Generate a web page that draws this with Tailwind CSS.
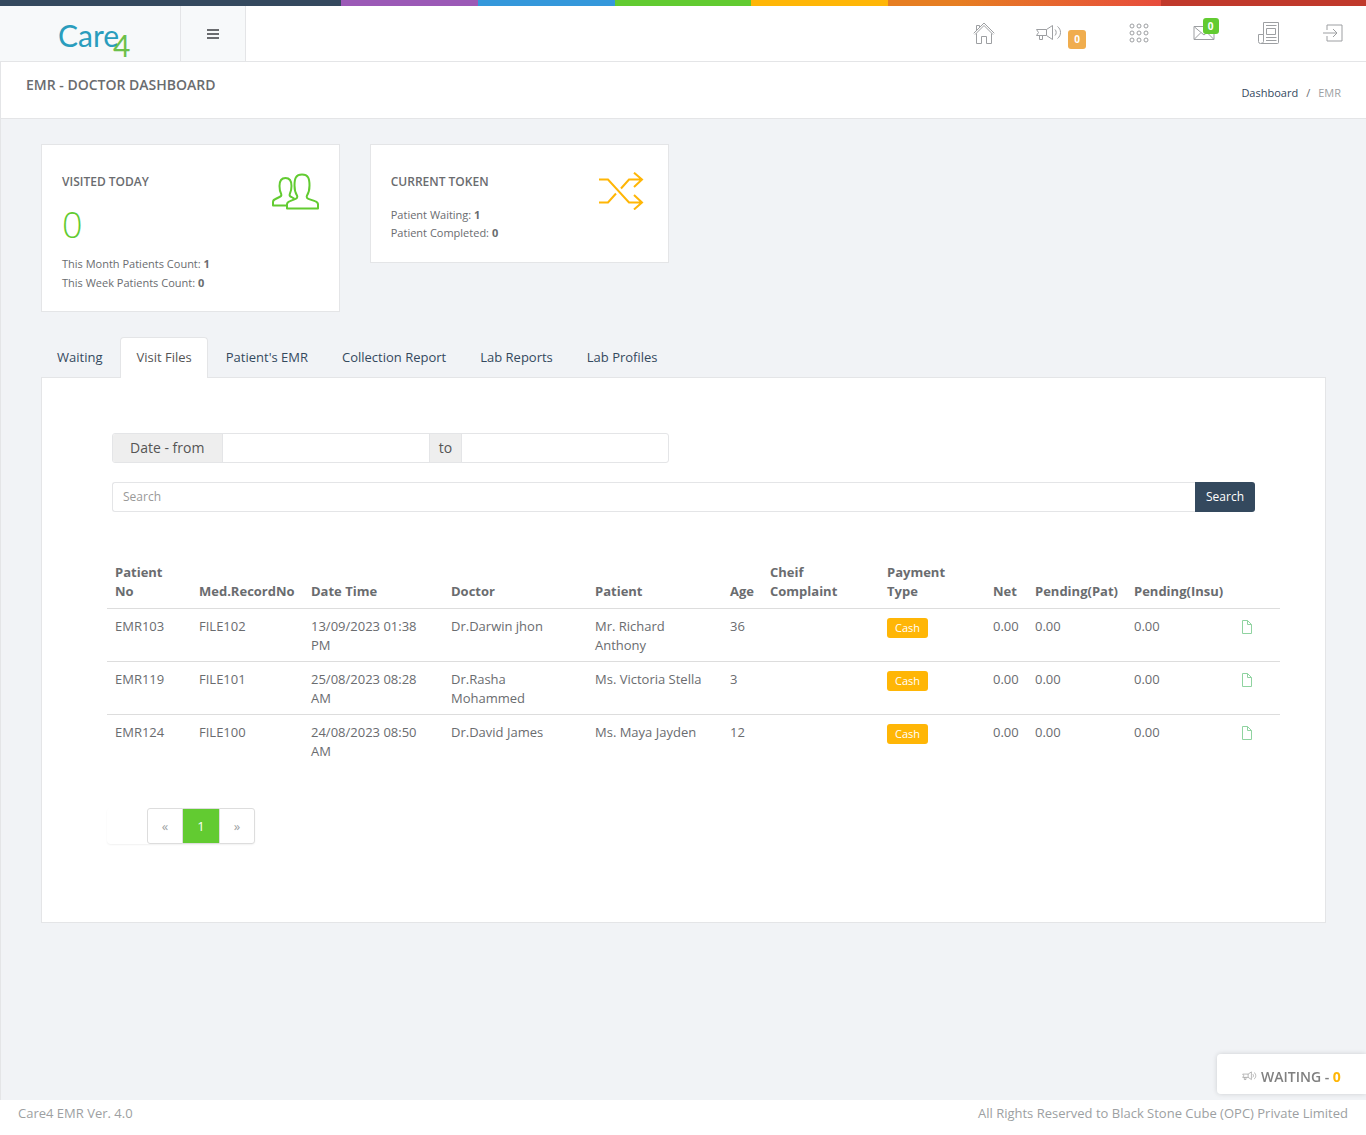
<!DOCTYPE html>
<html lang="en">
<head>
    <meta charset="utf-8">
    <meta name="viewport" content="width=device-width, initial-scale=1">
    <title>Care4 | EMR</title>
    <script src="https://cdn.jsdelivr.net/npm/@tailwindcss/browser@4"></script>
</head>
<body class="min-h-screen flex flex-col bg-[#f1f3f6] font-['Open_Sans',sans-serif] text-[13px] leading-[19px] text-[#6a6c6f]">

<!-- Color line -->
<div class="h-1.5 bg-[linear-gradient(to_right,#34495e_25%,#9b59b6_25%,#9b59b6_35%,#3498db_35%,#3498db_45%,#62cb31_45%,#62cb31_55%,#ffb606_55%,#ffb606_65%,#e67e22_65%,#e67e22_70%,#e74c3c_85%,#c0392b_85%)]"></div>

<!-- Header -->
<header class="flex h-14 bg-white border-b border-[#e4e5e7]">
    <a href="#" class="w-[181px] bg-[#f7f9fa] border-r border-[#e4e5e7]">
        <svg class="w-[180px] h-[55px] overflow-visible" viewBox="0 0 180 55" role="img" aria-label="Care4">
            <text x="58" y="41" font-family="Lato, sans-serif" font-size="30" fill="#2a9dbd">Care<tspan dx="-6" dy="10" fill="#6cc04a">4</tspan></text>
        </svg>
    </a>
    <button class="w-[65px] flex items-center justify-center bg-[#f7f9fa] border-r border-[#e4e5e7]" aria-label="Menu">
        <svg class="w-3 h-2.5" viewBox="0 0 12 10" fill="#6a6c6f"><path d="M0 0h12v2H0zM0 4h12v2H0zM0 8h12v2H0z"/></svg>
    </button>
    <nav class="ml-auto">
        <ul class="flex h-[53px] items-center text-[#9d9fa2]">
            <li class="w-[65px] flex justify-center">
                <a href="#" aria-label="Home">
                    <svg class="w-[22px] h-[22px]" viewBox="0 0 22 22" fill="none" stroke="currentColor">
                        <path d="M.7 11.3 11 1l10.3 10.3M2 12.5l9-9 9 9M3.5 11.5v10h5v-7h5v7h5v-10M3.5 8V3.500h3V5"/>
                    </svg>
                </a>
            </li>
            <li class="w-[90px] pl-5">
                <a href="#" class="flex items-center gap-1.5" aria-label="Waiting calls">
                    <svg class="w-[26px] h-[22px]" viewBox="0 0 26 22" fill="none" stroke="currentColor">
                        <path d="M.5 7.500h10v6h-10l2-3zM3.500 13.500v4h3v-4M10.500 7.500l6-4v14l-6-4M19 7.500c1.600 1.500 1.600 4.500 0 6M21.500 4.500c4 3 4 9 0 12"/>
                    </svg>
                    <span class="mt-3.5 w-[18px] h-[19px] rounded-[3px] bg-[#f0ad4e] text-white text-[10px] leading-[19px] font-bold text-center">0</span>
                </a>
            </li>
            <li class="w-[65px] flex justify-center">
                <a href="#" aria-label="Apps">
                    <svg class="w-5 h-5" viewBox="0 0 20 20" fill="none" stroke="currentColor">
                        <circle cx="3" cy="3" r="2"/><circle cx="10" cy="3" r="2"/><circle cx="17" cy="3" r="2"/>
                        <circle cx="3" cy="10" r="2"/><circle cx="10" cy="10" r="2"/><circle cx="17" cy="10" r="2"/>
                        <circle cx="3" cy="17" r="2"/><circle cx="10" cy="17" r="2"/><circle cx="17" cy="17" r="2"/>
                    </svg>
                </a>
            </li>
            <li class="w-[65px] flex justify-center">
                <a href="#" class="relative" aria-label="Messages">
                    <svg class="w-[22px] h-[22px]" viewBox="0 0 22 22" fill="none" stroke="currentColor">
                        <path d="M1 4.500h20v13H1zM1.500 5l9.500 8 9.500-8M1.500 17 8 10.500M20.500 17 14 10.500"/>
                    </svg>
                    <span class="absolute -top-1 left-2.5 w-4 h-4 rounded-[3px] bg-[#62cb31] text-white text-[10px] leading-4 font-bold text-center">0</span>
                </a>
            </li>
            <li class="w-[65px] flex justify-center">
                <a href="#" aria-label="News">
                    <svg class="w-[22px] h-[22px]" viewBox="0 0 22 22" fill="none" stroke="currentColor">
                        <path d="M5.500.500h15v20a1 1 0 0 1-1 1h-17a2 2 0 0 1-2-2v-7h5zM5.500 12.500v7a1.500 1.500 0 0 1-2 1.500M8 3.500h10.500M8.500 6.500h9v6h-9zM8 15.500h10.500M8 18.500h10.500"/>
                    </svg>
                </a>
            </li>
            <li class="w-[65px] flex justify-center">
                <a href="#" aria-label="Sign out">
                    <svg class="w-[22px] h-[22px]" viewBox="0 0 22 22" fill="none" stroke="currentColor">
                        <path d="M4 8V3h15v16H4v-5M0 11h14M10 7l4 4-4 4"/>
                    </svg>
                </a>
            </li>
        </ul>
    </nav>
</header>

<main class="flex-1 border-l border-[#e4e5e7]">
    <!-- Page heading -->
    <div class="flex justify-between h-[57px] px-[25px] bg-white border-b border-[#e4e5e7]">
        <h2 class="mt-3.5 text-sm leading-[18px] font-semibold">EMR - DOCTOR DASHBOARD</h2>
        <ol class="flex mt-[22px] text-[11px] leading-[18px]">
            <li><a href="#" class="text-[#34495e]">Dashboard</a></li>
            <li class="px-2">/</li>
            <li class="text-[#9d9fa2]">EMR</li>
        </ol>
    </div>

    <div class="px-10 pt-[25px]">
        <!-- Stats -->
        <div class="grid grid-cols-4 gap-[30px] items-start">
            <section class="flex justify-between h-[168px] px-5 bg-white border border-[#e4e5e7]">
                <div class="pt-[27px] text-[11px]">
                    <h3 class="text-xs leading-5 font-semibold">VISITED TODAY</h3>
                    <p class="mt-[13px] mb-[9px] text-[36px] leading-[40px] font-light text-[#62cb31]">0</p>
                    <p>This Month Patients Count: <strong>1</strong></p>
                    <p>This Week Patients Count: <strong>0</strong></p>
                </div>
                <svg class="mt-7 w-12 h-[38px]" viewBox="0 0 48 38" fill="none" stroke="#62cb31" stroke-width="2" stroke-linejoin="round">
                    <path d="M16 35.500v-4c0-2 1-2.800 3-3.400l5-2c2-.700 2.800-2 2-3.600-2-3-2.500-6-2.500-10C23.500 5 25 1.500 31 1.500s7.500 3.500 7.500 11c0 4-.500 7-2.500 10-.800 1.600 0 2.900 2 3.600l6 2c2 .600 3 1.400 3 3.400v4z"/>
                    <path d="M16 32.500H2V29c0-1.500 1-2.400 2.500-3l4-2c1.500-.600 2.300-1.500 1.700-3-1.500-2.500-1.700-5-1.700-8 0-5 2-8 6-8 3.500 0 6 2.300 6 8 0 3-.500 5.500-1.700 8-.600 1.500.2 2.400 1.700 3l3 1.800"/>
                </svg>
            </section>
            <section class="flex justify-between h-[119px] px-5 bg-white border border-[#e4e5e7]">
                <div class="pt-[27px] text-[11px] leading-[18px]">
                    <h3 class="mb-3.5 text-xs leading-5 font-semibold">CURRENT TOKEN</h3>
                    <p>Patient Waiting: <strong>1</strong></p>
                    <p>Patient Completed: <strong>0</strong></p>
                </div>
                <svg class="mt-[27px] mr-1 w-[45px] h-[38px]" viewBox="0 0 45 38" fill="none" stroke="#ffb606" stroke-width="2">
                    <path d="M0 7.500h9L30 30.500h13M0 30.500h9l8-9M22 16.500l8-9h13M35 .700l8 6.800-8 7.500M35 23l8 7.500-8 7"/>
                </svg>
            </section>
        </div>

        <!-- Tabs -->
        <ul class="relative flex mt-[25px] -mb-px gap-0.5 text-[#34495e]">
            <li><a href="#" class="block h-[41px] px-4 py-[11px]">Waiting</a></li>
            <li><a href="#" class="block h-[41px] px-[15px] py-2.5 bg-white border border-b-0 border-[#e4e5e7] rounded-t text-[#555]">Visit Files</a></li>
            <li><a href="#" class="block h-[41px] px-4 py-[11px]">Patient's EMR</a></li>
            <li><a href="#" class="block h-[41px] px-4 py-[11px]">Collection Report</a></li>
            <li><a href="#" class="block h-[41px] px-4 py-[11px]">Lab Reports</a></li>
            <li><a href="#" class="block h-[41px] px-4 py-[11px]">Lab Profiles</a></li>
        </ul>

        <div class="pt-[55px] pb-[78px] pl-[65px] pr-[45px] bg-white border border-[#e4e5e7]">
            <form class="ml-[5px] mr-[25px]">
                <div class="grid grid-cols-2 gap-[30px]">
                    <div class="flex h-[30px] border border-[#e4e5e7] rounded-[3px] overflow-hidden text-sm leading-7 text-[#555]">
                        <label for="date-from" class="pl-[17px] pr-[18px] bg-[#eee] border-r border-[#e4e5e7] whitespace-nowrap">Date - from</label>
                        <input id="date-from" type="text" class="flex-1 min-w-0 px-2.5 outline-none">
                        <label for="date-to" class="px-[9px] bg-[#eee] border-x border-[#e4e5e7]">to</label>
                        <input id="date-to" type="text" class="flex-1 min-w-0 px-2.5 outline-none">
                    </div>
                </div>
                <div class="flex h-[30px] mt-[19px]">
                    <input type="text" aria-label="Search" placeholder="Search" class="flex-1 min-w-0 px-2.5 text-xs border border-r-0 border-[#e4e5e7] rounded-l-[3px] placeholder:text-[#999] outline-none">
                    <button type="button" class="w-[60px] bg-[#34495e] text-white text-xs rounded-r-[3px]">Search</button>
                </div>
            </form>

            <!-- Visit files -->
            <table class="table-fixed w-full mt-[43px] text-left">
                <colgroup>
                    <col class="w-[84px]"><col class="w-[112px]"><col class="w-[140px]"><col class="w-[144px]">
                    <col class="w-[135px]"><col class="w-[40px]"><col class="w-[117px]"><col class="w-[106px]">
                    <col class="w-[42px]"><col class="w-[99px]"><col class="w-[107px]"><col class="w-[47px]">
                </colgroup>
                <thead>
                    <tr class="align-bottom border-b border-[#ddd] [&>th]:px-2 [&>th]:pt-2 [&>th]:pb-[7px]">
                        <th>Patient<br>No</th>
                        <th>Med.RecordNo</th>
                        <th>Date Time</th>
                        <th>Doctor</th>
                        <th>Patient</th>
                        <th>Age</th>
                        <th>Cheif<br>Complaint</th>
                        <th>Payment<br>Type</th>
                        <th>Net</th>
                        <th>Pending(Pat)</th>
                        <th>Pending(Insu)</th>
                        <th></th>
                    </tr>
                </thead>
                <tbody id="visits" class="align-top [&>tr+tr]:border-t [&>tr]:border-[#ddd] [&_td]:px-2 [&_td]:pt-2 [&_td]:pb-1.5"></tbody>
            </table>

            <div class="flex w-[148px] mt-[41px] pl-10 rounded shadow-[0_1px_2px_rgba(0,0,0,0.06)]">
                <button class="w-9 h-9 border border-[#ddd] rounded-l-[3px] text-[#9d9fa2]" aria-label="Previous">«</button>
                <button class="w-9 h-9 bg-[#62cb31] border-y border-[#ddd] text-white">1</button>
                <button class="w-9 h-9 border border-[#ddd] rounded-r-[3px] text-[#9d9fa2]" aria-label="Next">»</button>
            </div>
        </div>
    </div>
</main>

<!-- Waiting box -->
<a href="#" class="fixed right-0 bottom-[41px] w-[149px] h-10 pl-[25px] flex items-center gap-1 bg-white rounded-l shadow-[0_0_5px_rgba(0,0,0,0.15)] text-sm font-semibold text-[#808080]">
    <svg class="mt-1 w-[15px] h-3" viewBox="0 0 26 22" fill="none" stroke="currentColor">
        <path d="M.5 7.500h10v6h-10l2-3zM3.500 13.500v4h3v-4M10.500 7.500l6-4v14l-6-4M19 7.500c1.600 1.500 1.600 4.500 0 6M21.500 4.500c4 3 4 9 0 12"/>
    </svg>
    <span class="pt-1.5">WAITING - <span class="text-[#ffb606] font-bold">0</span></span>
</a>

<footer class="flex justify-between h-[35px] px-[18px] py-1 bg-white text-[#9d9fa2]">
    <span>Care4 EMR Ver. 4.0</span>
    <span>All Rights Reserved to Black Stone Cube (OPC) Private Limited</span>
</footer>

<script>
    const visits = [
        { no: 'EMR103', file: 'FILE102', date: '13/09/2023 01:38 PM', doctor: 'Dr.Darwin jhon', patient: 'Mr. Richard Anthony', age: 36 },
        { no: 'EMR119', file: 'FILE101', date: '25/08/2023 08:28 AM', doctor: 'Dr.Rasha Mohammed', patient: 'Ms. Victoria Stella', age: 3 },
        { no: 'EMR124', file: 'FILE100', date: '24/08/2023 08:50 AM', doctor: 'Dr.David James', patient: 'Ms. Maya Jayden', age: 12 }
    ];
    document.getElementById('visits').innerHTML = visits.map(visit => `
        <tr>
            <td>${visit.no}</td>
            <td>${visit.file}</td>
            <td>${visit.date}</td>
            <td>${visit.doctor}</td>
            <td>${visit.patient}</td>
            <td>${visit.age}</td>
            <td></td>
            <td><button class="block mt-px h-5 px-2 rounded-[3px] bg-[#ffb606] text-white text-[11px] leading-5">Cash</button></td>
            <td>0.00</td>
            <td>0.00</td>
            <td>0.00</td>
            <td>
                <a href="#" class="block pt-[3px]" aria-label="Open file">
                    <svg class="w-3 h-3.5" viewBox="0 0 12 14" fill="none" stroke="#8fd3a0"><path d="M1.500.500h5l4 4v9h-9zM6.500.500v4h4"/></svg>
                </a>
            </td>
        </tr>`).join('');
</script>
</body>
</html>
